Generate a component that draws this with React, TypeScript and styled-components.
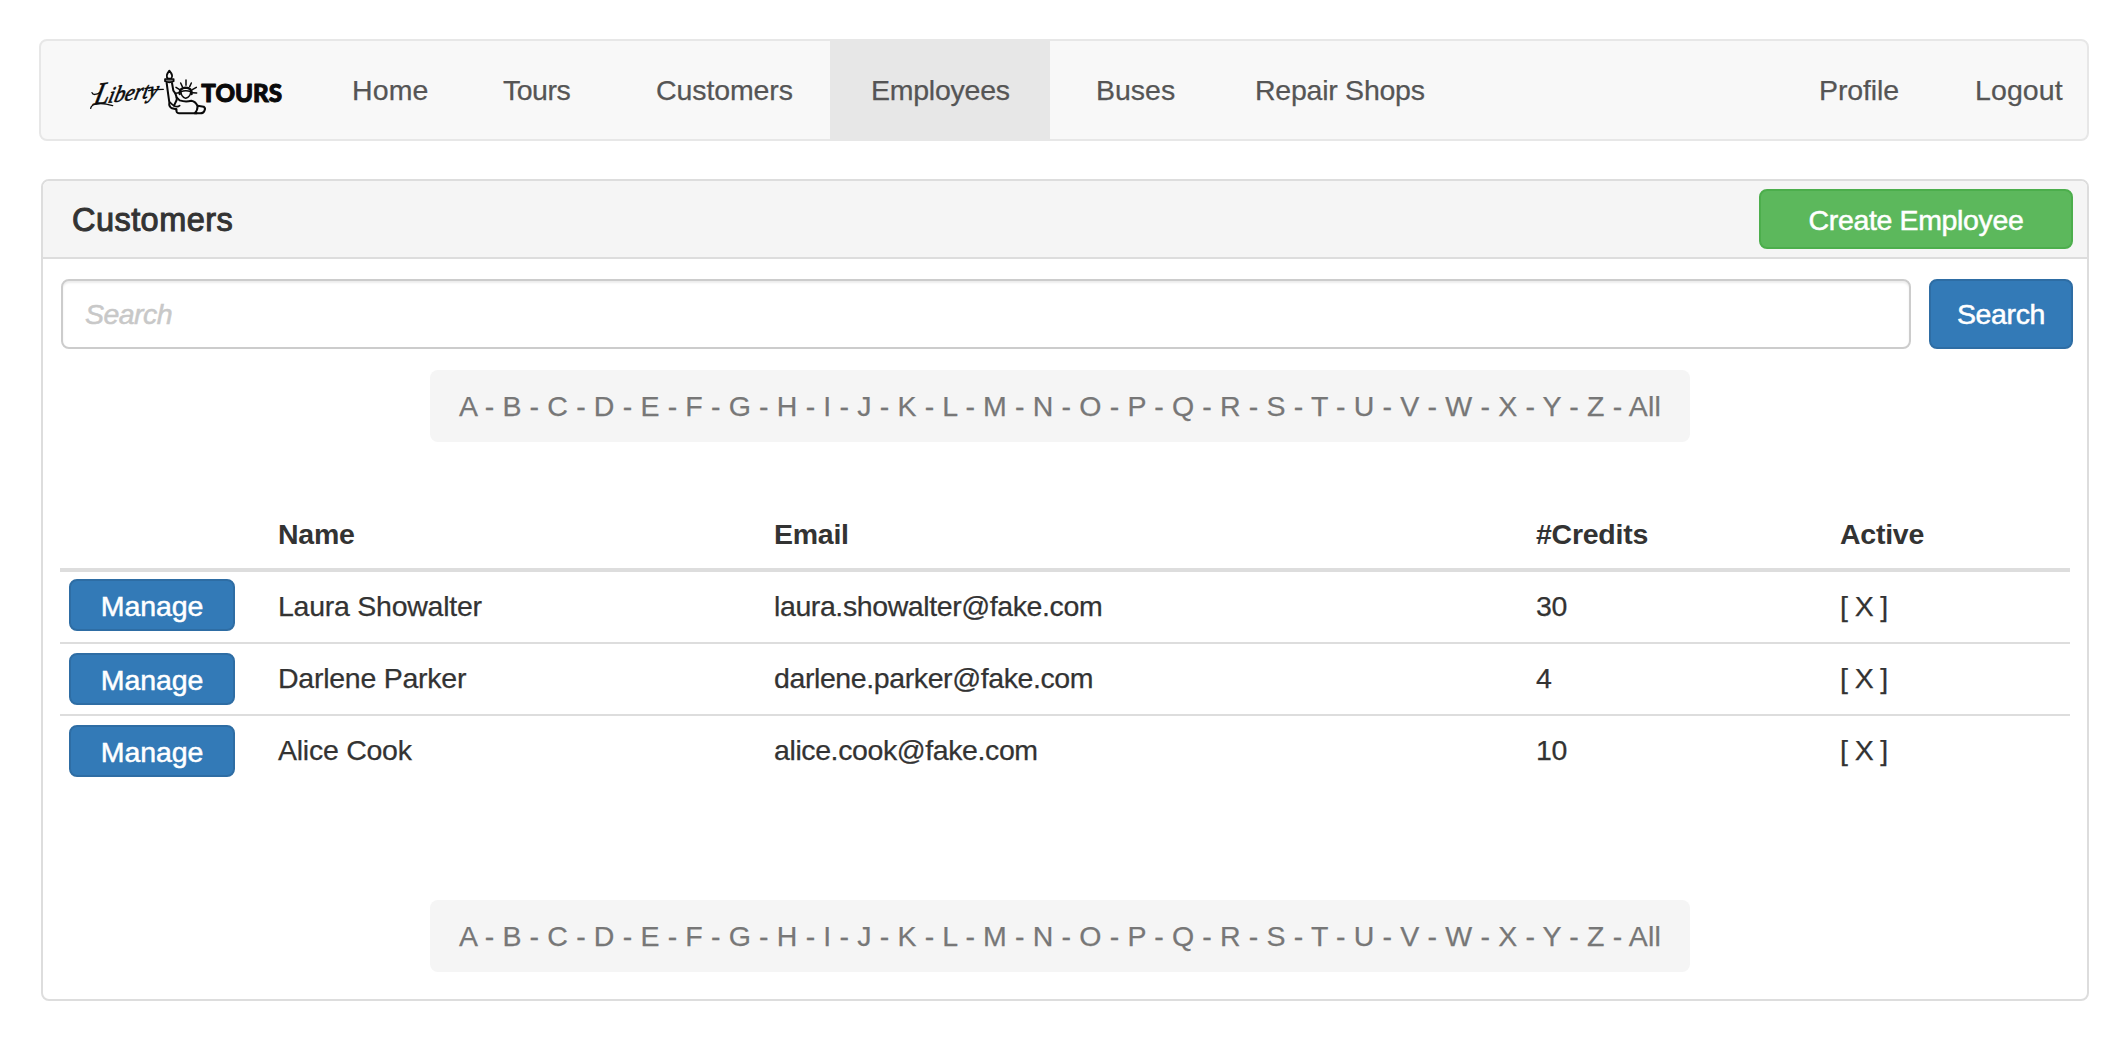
import React from 'react';
import styled, { createGlobalStyle, css } from 'styled-components';

const GlobalStyle = createGlobalStyle`
  *, *::before, *::after { box-sizing: border-box; }
  body {
    margin: 0;
    background: #fff;
    color: #333;
    font-family: "Liberation Sans", Arial, Helvetica, sans-serif;
    font-size: 28.5px;
    line-height: 40px;
    -webkit-text-stroke: 0.25px currentColor;
  }
`;

const Page = styled.div`
  width: 2128px;
  height: 1040px;
  padding: 39px 39px 0 39px;
`;

const Navbar = styled.nav`
  display: flex;
  align-items: center;
  height: 102px;
  border: 2px solid #e7e7e7;
  border-radius: 8px;
  background: #f8f8f8;
`;

const Brand = styled.a`
  display: flex;
  flex: none;
  width: 271px;
  padding: 4px 0 0 39px;
`;

const NavLink = styled.a<{ $width: number; $active?: boolean; $spacing?: number }>`
  display: flex;
  flex: none;
  align-items: center;
  width: ${(p) => p.$width}px;
  height: 98px;
  padding: 0 0 0 40px;
  color: #555;
  letter-spacing: ${(p) => p.$spacing ?? -0.1}px;
  white-space: nowrap;
  ${(p) =>
    p.$active &&
    css`
      margin-right: 6px;
      padding-left: 41px;
      background: #e7e7e7;
    `}
`;

const NavRight = styled.div`
  display: flex;
  margin-left: auto;
`;

const Panel = styled.section`
  height: 822px;
  margin: 38px 0 0 2px;
  border: 2px solid #ddd;
  border-radius: 8px;
`;

const PanelHeading = styled.header`
  display: flex;
  align-items: center;
  justify-content: space-between;
  height: 78px;
  padding: 0 14px 0 29px;
  border-bottom: 2px solid #ddd;
  border-radius: 6px 6px 0 0;
  background: #f5f5f5;
`;

const PanelTitle = styled.h3`
  margin: 2px 0 0;
  font-size: 32.5px;
  font-weight: 400;
  letter-spacing: 0.45px;
  -webkit-text-stroke: 1px #333;
`;

const PanelBody = styled.div`
  padding: 20px 14px 0 18px;
`;

const Button = styled.button<{ $tone: 'primary' | 'success'; $width: number; $height: number; $spacing: number; $drop?: number }>`
  display: flex;
  flex: none;
  align-items: center;
  justify-content: center;
  width: ${(p) => p.$width}px;
  height: ${(p) => p.$height}px;
  padding: ${(p) => p.$drop ?? 0}px 0 0;
  border: 2px solid ${(p) => (p.$tone === 'success' ? '#4cae4c' : '#2e6da4')};
  border-radius: 8px;
  background: ${(p) => (p.$tone === 'success' ? '#5cb85c' : '#337ab7')};
  color: #fff;
  font: inherit;
  letter-spacing: ${(p) => p.$spacing}px;
  -webkit-text-stroke: 0.5px #fff;
`;

const SearchRow = styled.div`
  display: flex;
  gap: 18px;
`;

const SearchInput = styled.input`
  flex: 1;
  min-width: 0;
  height: 70px;
  padding: 0 22px;
  border: 2px solid #ccc;
  border-radius: 8px;
  box-shadow: inset 0 2px 2px rgba(0, 0, 0, 0.075);
  background: #fff;
  font: inherit;
  &::placeholder {
    color: #c8c8c8;
    font-style: italic;
    letter-spacing: -0.55px;
    opacity: 1;
    -webkit-text-stroke: 0.5px #c8c8c8;
  }
`;

const LetterBar = styled.div`
  display: flex;
  align-items: center;
  width: 1260px;
  height: 72px;
  margin: 21px 0 0 369px;
  padding: 0 0 0 29px;
  border-radius: 8px;
  background: #f5f5f5;
  color: #777;
  letter-spacing: 0.155px;
  white-space: nowrap;
`;

const TableArea = styled.div`
  display: flow-root;
  height: 437px;
`;

const Table = styled.table`
  width: 2010px;
  margin: 52px 0 0 -1px;
  border-collapse: separate;
  border-spacing: 0;
  table-layout: fixed;
`;

const Th = styled.th<{ $width?: number }>`
  width: ${(p) => (p.$width ? `${p.$width}px` : 'auto')};
  height: 78px;
  padding: 20px 0 0 10px;
  border-bottom: 4px solid #ddd;
  text-align: left;
  vertical-align: top;
  letter-spacing: -0.25px;
  -webkit-text-stroke: 0;
`;

const Td = styled.td<{ $top: number; $last?: boolean; $spacing?: number; $action?: boolean }>`
  height: ${(p) => (p.$last ? 70 : 72)}px;
  padding: ${(p) => p.$top}px 0 0 ${(p) => (p.$action ? 9 : 10)}px;
  border-bottom: ${(p) => (p.$last ? 'none' : '2px solid #ddd')};
  vertical-align: top;
  letter-spacing: ${(p) => p.$spacing ?? -0.25}px;
`;

const letters = [...'ABCDEFGHIJKLMNOPQRSTUVWXYZ', 'All'].join(' - ');

const employees = [
  { name: 'Laura Showalter', email: 'laura.showalter@fake.com', credits: 30 },
  { name: 'Darlene Parker', email: 'darlene.parker@fake.com', credits: 4 },
  { name: 'Alice Cook', email: 'alice.cook@fake.com', credits: 10 },
];

function Logo() {
  return (
    <svg width="220" height="64" viewBox="0 0 660 192" fill="none" stroke="#0a0a0a" strokeLinecap="round" strokeLinejoin="round">
      <g transform="translate(42 134) rotate(-7) skewX(-20)" fill="#0a0a0a" strokeWidth="1.8" fontFamily="Liberation Serif" fontStyle="italic">
        <text x="-4" y="0" fontSize="92" textLength="46" lengthAdjust="spacingAndGlyphs">L</text>
        <text x="40" y="0" fontSize="68" textLength="150" lengthAdjust="spacingAndGlyphs">iberty</text>
      </g>
      <path d="M32 145C34 131 60 126 98 137M36 98C38 105 48 106 62 96M206 92Q226 88 250 88" strokeWidth="4" />
      {/* torch and raised arm */}
      <path d="M268 32C260 42 258 51 264 56H273C279 51 277 42 268 32Z" strokeWidth="5.5" />
      <path d="M255 57H281V64Q268 70 255 64Z" fill="#777" strokeWidth="5" />
      <path d="M260 69L265 106L268 127Q266 140 276 145L289 148" strokeWidth="6" />
      <path d="M276 69L280 92Q291 105 290 120L282 137" strokeWidth="6" />
      <path d="M270 127Q275 133 282 137Q292 143 299 137" strokeWidth="5" />
      {/* crown and face */}
      <path d="M299 102Q298 84 317 83Q336 84 335 102" strokeWidth="7" />
      <path d="M303 95Q317 89 332 95Q332 110 317 115Q303 110 303 95Z" strokeWidth="4.5" />
      <path d="M318 60V76M302 69L307 80M334 69L329 80M288 82L299 89M349 82L337 89M287 100L297 98M350 99L338 98" strokeWidth="4.5" />
      {/* shoulders, robe and tablet */}
      <path d="M290 112L299 121Q317 127 334 122Q347 124 352 137M289 148Q288 159 297 160H350" strokeWidth="6" />
      <path d="M353 137L371 140Q378 145 373 153Q370 160 361 160H344Q353 151 353 137Z" strokeWidth="6" />
      <text x="364" y="127" fill="#0a0a0a" strokeWidth="3" fontFamily="Lato" fontWeight="900" fontSize="73" textLength="242" lengthAdjust="spacingAndGlyphs">TOURS</text>
    </svg>
  );
}

export default function App() {
  return (
    <Page>
      <GlobalStyle />
      <Navbar>
        <Brand><Logo /></Brand>
        <NavLink $width={151} $spacing={0.1}>Home</NavLink>
        <NavLink $width={153} $spacing={-0.5}>Tours</NavLink>
        <NavLink $width={214}>Customers</NavLink>
        <NavLink $width={220} $active $spacing={-0.25}>Employees</NavLink>
        <NavLink $width={159} $spacing={0}>Buses</NavLink>
        <NavLink $width={250} $spacing={-0.25}>Repair Shops</NavLink>
        <NavRight>
          <NavLink $width={156}>Profile</NavLink>
          <NavLink $width={152} $spacing={0.1}>Logout</NavLink>
        </NavRight>
      </Navbar>
      <Panel>
        <PanelHeading>
          <PanelTitle>Customers</PanelTitle>
          <Button $tone="success" $width={314} $height={60} $drop={1} $spacing={-0.35}>Create Employee</Button>
        </PanelHeading>
        <PanelBody>
          <SearchRow>
            <SearchInput placeholder="Search" />
            <Button $tone="primary" $width={144} $height={70} $spacing={-0.35}>Search</Button>
          </SearchRow>
          <LetterBar>{letters}</LetterBar>
          <TableArea>
            <Table>
              <thead>
                <tr>
                  <Th $width={208} />
                  <Th $width={496}>Name</Th>
                  <Th $width={762}>Email</Th>
                  <Th $width={304}>#Credits</Th>
                  <Th>Active</Th>
                </tr>
              </thead>
              <tbody>
                {employees.map((e, i) => {
                  const last = i === employees.length - 1;
                  return (
                    <tr key={e.email}>
                      <Td $top={i === 0 ? 7 : 9} $last={last} $action>
                        <Button $tone="primary" $width={166} $height={52} $drop={1} $spacing={-0.1}>Manage</Button>
                      </Td>
                      <Td $top={14} $last={last}>{e.name}</Td>
                      <Td $top={14} $last={last} $spacing={-0.4}>{e.email}</Td>
                      <Td $top={14} $last={last}>{e.credits}</Td>
                      <Td $top={14} $last={last} $spacing={-0.6}>[ X ]</Td>
                    </tr>
                  );
                })}
              </tbody>
            </Table>
          </TableArea>
          <LetterBar>{letters}</LetterBar>
        </PanelBody>
      </Panel>
    </Page>
  );
}
